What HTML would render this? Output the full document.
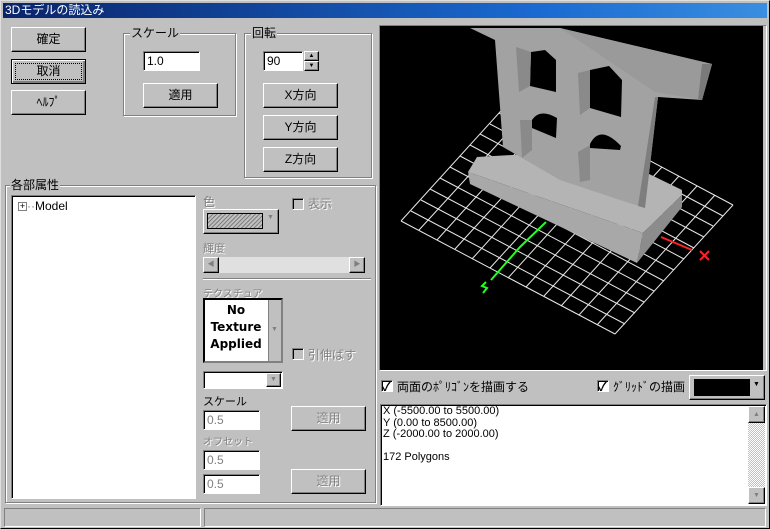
<!DOCTYPE html>
<html><head><meta charset="utf-8"><style>
*{box-sizing:border-box;margin:0;padding:0}
body{width:770px;height:529px;background:#c0c0c0;font-family:"Liberation Sans","Noto Sans CJK JP",sans-serif;font-size:12px;color:#000;position:relative;overflow:hidden}
.a{position:absolute}
.btn{position:absolute;background:#c0c0c0;border:1px solid;border-color:#fff #000 #000 #fff;box-shadow:inset -1px -1px 0 #808080;text-align:center;font-size:12px}
.grp{position:absolute;border:1px solid #808080;box-shadow:1px 1px 0 #fff,inset 1px 1px 0 #fff}
.grp span{position:absolute;top:-8px;left:6px;background:#c0c0c0;padding:0 1px;font-size:12px;line-height:14px}
.edit{position:absolute;background:#fff;border:1px solid;border-color:#808080 #fff #fff #808080;box-shadow:inset 1px 1px 0 #000;font-size:12px;padding:2px 0 0 3px;line-height:14px}
.dis{color:#808080;text-shadow:1px 1px 0 #fff}
.chk{position:absolute;width:12px;height:12px;background:#fff;border:1px solid;border-color:#808080 #fff #fff #808080;box-shadow:inset 1px 1px 0 #000}
</style></head><body>
<div class="a" style="left:0;top:0;width:770px;height:529px;border:1px solid;border-color:#dfdfdf #000 #000 #dfdfdf"></div>
<div class="a" style="left:3px;top:3px;width:764px;height:15px;background:linear-gradient(90deg,#0a246a,#1a6ad0 70%,#3a8ee0);color:#fff;font-size:12px;line-height:15px;padding-left:2px">3Dモデルの読込み</div>

<div class="btn" style="left:11px;top:27px;width:75px;height:25px;line-height:23px">確定</div>
<div class="btn" style="left:11px;top:59px;width:75px;height:25px;line-height:21px;border:1px solid #000;box-shadow:inset 1px 1px 0 #fff,inset -2px -2px 0 #808080"><span style="border:1px dotted #000;display:block;margin:3px;line-height:15px">取消</span></div>
<div class="btn" style="left:11px;top:90px;width:75px;height:25px;line-height:23px">ﾍﾙﾌﾟ</div>

<div class="grp" style="left:123px;top:33px;width:113px;height:83px"><span>スケール</span></div>
<div class="edit" style="left:143px;top:51px;width:57px;height:20px">1.0</div>
<div class="btn" style="left:143px;top:83px;width:75px;height:25px;line-height:23px">適用</div>

<div class="grp" style="left:244px;top:33px;width:128px;height:145px"><span>回転</span></div>
<div class="edit" style="left:263px;top:51px;width:40px;height:20px">90</div>
<div class="btn" style="left:304px;top:51px;width:15px;height:10px;font-size:6px;line-height:8px">▲</div>
<div class="btn" style="left:304px;top:61px;width:15px;height:10px;font-size:6px;line-height:8px">▼</div>
<div class="btn" style="left:263px;top:83px;width:75px;height:25px;line-height:23px">X方向</div>
<div class="btn" style="left:263px;top:115px;width:75px;height:25px;line-height:23px">Y方向</div>
<div class="btn" style="left:263px;top:147px;width:75px;height:25px;line-height:23px">Z方向</div>

<div class="grp" style="left:5px;top:185px;width:371px;height:318px"><span style="left:4px">各部属性</span></div>
<div class="edit" style="left:11px;top:195px;width:185px;height:304px;padding:3px 0 0 6px"><span style="display:inline-block;width:9px;height:9px;border:1px solid #808080;font-size:9px;line-height:7px;text-align:center;vertical-align:middle">+</span><span style="color:#808080">··</span>Model</div>

<div class="a dis" style="left:203px;top:193px">色</div>
<div class="a" style="left:203px;top:209px;width:76px;height:25px;border:1px solid;border-color:#fff #000 #000 #fff;box-shadow:inset -1px -1px 0 #808080"></div>
<div class="a" style="left:207px;top:213px;width:56px;height:16px;border:1px solid #000;background:repeating-linear-gradient(135deg,#808080 0 1px,#c0c0c0 1px 3px)"></div>
<div class="a" style="left:267px;top:214px;font-size:7px;color:#808080">▼</div>
<div class="chk" style="left:292px;top:198px;background:#c0c0c0"></div>
<div class="a dis" style="left:308px;top:195px">表示</div>
<div class="a dis" style="left:203px;top:240px;font-size:11px">輝度</div>
<div class="a" style="left:203px;top:257px;width:162px;height:16px;background:#e0e0e0"></div>
<div class="btn" style="left:203px;top:257px;width:16px;height:16px;font-size:7px;line-height:14px;color:#808080">◀</div>
<div class="btn" style="left:349px;top:257px;width:16px;height:16px;font-size:7px;line-height:14px;color:#808080">▶</div>
<div class="a" style="left:203px;top:278px;width:168px;height:2px;border-top:1px solid #808080;border-bottom:1px solid #fff"></div>
<div class="a dis" style="left:203px;top:285px;font-size:10px">テクスチュア</div>
<div class="a" style="left:203px;top:298px;width:80px;height:65px;background:#fff;border:2px solid;border-color:#000 #808080 #808080 #000"></div>
<div class="a" style="left:205px;top:302px;width:62px;text-align:center;font-weight:bold;font-size:12px;line-height:17px;font-family:'DejaVu Sans',sans-serif">No<br>Texture<br>Applied</div>
<div class="a" style="left:268px;top:300px;width:13px;height:61px;background:#c0c0c0;border-left:1px solid #808080"></div>
<div class="a" style="left:271px;top:326px;font-size:7px;color:#808080">▼</div>
<div class="chk" style="left:292px;top:348px;background:#c0c0c0"></div>
<div class="a dis" style="left:308px;top:346px">引伸ばす</div>
<div class="edit" style="left:203px;top:371px;width:80px;height:18px"></div>
<div class="btn" style="left:266px;top:373px;width:15px;height:14px;font-size:7px;line-height:12px;color:#808080">▼</div>
<div class="a" style="left:203px;top:393px;font-size:11px">スケール</div>
<div class="edit dis" style="left:203px;top:410px;width:57px;height:20px;text-shadow:none">0.5</div>
<div class="btn dis" style="left:291px;top:406px;width:75px;height:25px;line-height:23px">適用</div>
<div class="a dis" style="left:203px;top:433px;font-size:10px">オフセット</div>
<div class="edit dis" style="left:203px;top:450px;width:57px;height:20px;text-shadow:none">0.5</div>
<div class="edit dis" style="left:203px;top:474px;width:57px;height:20px;text-shadow:none">0.5</div>
<div class="btn dis" style="left:291px;top:469px;width:75px;height:25px;line-height:23px">適用</div>

<svg class="a" style="left:380px;top:26px" width="387" height="344" viewBox="380 26 387 344">
<rect x="380" y="26" width="387" height="344" fill="#000"/>
<g stroke="#fff" stroke-width="1" fill="none" id="grid"></g>
<!-- grid lines -->
<g stroke="#e8e8e8" stroke-width="1">
<line x1="401" y1="221" x2="615" y2="334"/><line x1="411" y1="211" x2="625" y2="324"/><line x1="421" y1="200" x2="635" y2="313"/><line x1="430" y1="189" x2="644" y2="302"/><line x1="440" y1="178" x2="654" y2="291"/><line x1="450" y1="167" x2="664" y2="281"/><line x1="460" y1="156" x2="674" y2="270"/><line x1="470" y1="145" x2="684" y2="259"/><line x1="480" y1="134" x2="694" y2="248"/><line x1="490" y1="124" x2="704" y2="237"/><line x1="499" y1="113" x2="713" y2="226"/><line x1="509" y1="102" x2="723" y2="216"/><line x1="519" y1="91" x2="733" y2="205"/>
<line x1="401" y1="221" x2="519" y2="91"/><line x1="419" y1="230" x2="537" y2="101"/><line x1="437" y1="240" x2="555" y2="110"/><line x1="455" y1="249" x2="573" y2="120"/><line x1="472" y1="259" x2="590" y2="129"/><line x1="490" y1="268" x2="608" y2="139"/><line x1="508" y1="278" x2="626" y2="148"/><line x1="526" y1="287" x2="644" y2="158"/><line x1="544" y1="296" x2="662" y2="167"/><line x1="561" y1="306" x2="679" y2="176"/><line x1="579" y1="315" x2="697" y2="186"/><line x1="597" y1="325" x2="715" y2="195"/><line x1="615" y1="334" x2="733" y2="205"/>
</g>
<polyline points="546,222 520,247 491,280" stroke="#2f2" stroke-width="2" fill="none"/>
<path d="M486 282 l-4 4 l5 2 l-4 5" stroke="#2f2" stroke-width="2" fill="none"/>
<line x1="661" y1="237" x2="692" y2="250" stroke="#f22" stroke-width="2"/>
<path d="M700 251 l9 9 M709 251 l-9 9" stroke="#f22" stroke-width="2"/>
<!-- base -->
<polygon points="477,157 468,172 643,233 682,195 682,190 600,150" fill="#b4b4b4"/>
<polygon points="468,172 470,184 637,263 643,233" fill="#a8a8a8"/>
<polygon points="643,233 682,195 682,207 637,263" fill="#8c8c8c"/>
<!-- pillar & beam -->
<polygon points="470,28 560,28 712,64 702,100 658,97 645,208 620,200 560,180 503,147 495,40" fill="#a2a2a2"/>
<polygon points="560,28 712,64 702,100 655,92" fill="#9a9a9a"/>
<polygon points="702,64 712,64 702,100 698,100" fill="#7a7a7a"/>
<polygon points="655,97 658,97 645,208 638,206" fill="#7e7e7e"/>
<!-- windows -->
<polygon points="531,52 545,50 556,60 556,92 530,86" fill="#000"/>
<polygon points="516,47 531,52 530,86 519,92" fill="#8a8a8a"/>
<polygon points="590,70 609,66 622,80 621,117 590,108" fill="#000"/>
<polygon points="578,73 590,70 590,108 580,115" fill="#8a8a8a"/>
<path d="M532 120 Q540 108 557 118 L556 138 L532 128Z" fill="#000"/>
<path d="M590 144 Q600 124 621 146 L620 150 L590 148Z" fill="#000"/>
<polygon points="520,120 532,120 532,150 522,158" fill="#8a8a8a"/>
<polygon points="578,152 590,145 590,180 580,182" fill="#8a8a8a"/>
<rect x="763" y="26" width="4" height="344" fill="#c0c0c0"/>
</svg>
<div class="a" style="left:379px;top:25px;width:388px;height:346px;border:1px solid;border-color:#808080 #fff #fff #808080"></div>

<div class="chk" style="left:381px;top:380px"></div><div class="a" style="left:382px;top:378px;font-size:12px;font-weight:bold">✓</div>
<div class="a" style="left:397px;top:378px">両面のﾎﾟﾘｺﾞﾝを描画する</div>
<div class="chk" style="left:597px;top:380px"></div><div class="a" style="left:598px;top:378px;font-size:12px;font-weight:bold">✓</div>
<div class="a" style="left:613px;top:378px">ｸﾞﾘｯﾄﾞの描画</div>
<div class="a" style="left:689px;top:375px;width:76px;height:25px;border:1px solid;border-color:#fff #000 #000 #fff;box-shadow:inset -1px -1px 0 #808080"></div>
<div class="a" style="left:694px;top:379px;width:56px;height:17px;background:#000"></div>
<div class="a" style="left:753px;top:381px;font-size:7px">▼</div>

<div class="edit" style="left:380px;top:404px;width:387px;height:102px;padding:1px 0 0 2px;line-height:11.5px;font-size:11px">X (-5500.00 to 5500.00)<br>Y (0.00 to 8500.00)<br>Z (-2000.00 to 2000.00)<br><br>172 Polygons</div>
<div class="a" style="left:748px;top:406px;width:17px;height:98px;background:repeating-conic-gradient(#c0c0c0 0 25%,#fff 0 50%) 0 0/2px 2px"></div>
<div class="btn" style="left:748px;top:406px;width:17px;height:17px;font-size:7px;line-height:15px;color:#808080">▲</div>
<div class="btn" style="left:748px;top:487px;width:17px;height:17px;font-size:7px;line-height:15px;color:#808080">▼</div>

<div class="a" style="left:4px;top:508px;width:197px;height:19px;border:1px solid;border-color:#808080 #fff #fff #808080"></div>
<div class="a" style="left:204px;top:508px;width:562px;height:19px;border:1px solid;border-color:#808080 #fff #fff #808080"></div>
</body></html>
